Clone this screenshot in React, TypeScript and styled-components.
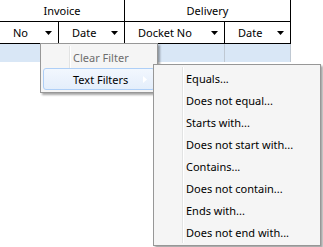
import React from 'react';
import styled, { createGlobalStyle } from 'styled-components';

const GlobalStyle = createGlobalStyle`
  html, body {
    margin: 0;
    padding: 0;
    background: #ffffff;
  }
  body {
    font-family: "Noto Sans", "Liberation Sans", sans-serif;
    font-size: 11px;
    color: #000000;
  }
`;

const Page = styled.div`
  position: relative;
  width: 323px;
  height: 247px;
  overflow: hidden;
`;

const Grid = styled.div`
  display: grid;
  grid-template-columns: 59px 66px 100px 66px;
  grid-template-rows: 22px 22px 18px;
  width: 291px;
`;

const GroupCell = styled.div<{ $span: number }>`
  grid-column: span ${(p) => p.$span};
  display: flex;
  align-items: center;
  justify-content: center;
  border-bottom: 1px solid #000;
  border-right: 1px solid #000;
`;

const HeadCell = styled.div`
  display: flex;
  align-items: center;
  justify-content: space-between;
  padding: 0 6px 0 13px;
  border-bottom: 1px solid #000;
  border-right: 1px solid #000;
`;

const FilterRowCell = styled.div`
  background: #d9e7f6;
  border-right: 1px solid #bfc8d2;
`;

const DropArrow = () => (
  <svg width="7" height="4" viewBox="0 0 7 4">
    <path d="M0 0H7L3.5 4Z" fill="#000" />
  </svg>
);

const Menu = styled.div<{ $left: number; $top: number; $width: number }>`
  position: absolute;
  left: ${(p) => p.$left}px;
  top: ${(p) => p.$top}px;
  width: ${(p) => p.$width}px;
  box-sizing: border-box;
  padding: 2px;
  background: #f5f5f5;
  border: 1px solid #979797;
  box-shadow: 2px 2px 2px rgba(0, 0, 0, 0.35);
  &::before {
    content: '';
    position: absolute;
    left: 28px;
    top: 2px;
    bottom: 2px;
    width: 1px;
    background: #e2e3e3;
    box-shadow: 1px 0 0 #ffffff;
  }
`;

const Item = styled.div<{ $disabled?: boolean; $hot?: boolean }>`
  position: relative;
  height: 22px;
  box-sizing: border-box;
  display: flex;
  align-items: center;
  padding-left: 29px;
  border: 1px solid ${(p) => (p.$hot ? '#aecff7' : 'transparent')};
  border-radius: 3px;
  background: ${(p) =>
    p.$hot ? 'linear-gradient(#f2f7fe, #e4eefb)' : 'transparent'};
  color: ${(p) => (p.$disabled ? '#6d6d6d' : '#000')};
  white-space: nowrap;
`;

const SubArrow = styled.svg`
  position: absolute;
  right: 7px;
  top: 7px;
`;

const filters = [
  'Equals...',
  'Does not equal...',
  'Starts with...',
  'Does not start with...',
  'Contains...',
  'Does not contain...',
  'Ends with...',
  'Does not end with...',
];

export default function App(): React.JSX.Element {
  return (
    <Page>
      <GlobalStyle />
      <Grid>
        <GroupCell $span={2}>Invoice</GroupCell>
        <GroupCell $span={2}>Delivery</GroupCell>
        <HeadCell>
          No <DropArrow />
        </HeadCell>
        <HeadCell>
          Date <DropArrow />
        </HeadCell>
        <HeadCell>
          Docket No <DropArrow />
        </HeadCell>
        <HeadCell>
          Date <DropArrow />
        </HeadCell>
        <FilterRowCell />
        <FilterRowCell />
        <FilterRowCell />
        <FilterRowCell />
      </Grid>

      <Menu $left={40} $top={43} $width={118}>
        <Item $disabled>Clear Filter</Item>
        <Item $hot>
          Text Filters
          <SubArrow width="4" height="7" viewBox="0 0 4 7">
            <path d="M0 0L4 3.5L0 7Z" fill="#ffffff" />
          </SubArrow>
        </Item>
      </Menu>

      <Menu $left={153} $top={64} $width={168}>
        {filters.map((f) => (
          <Item key={f}>{f}</Item>
        ))}
      </Menu>
    </Page>
  );
}
